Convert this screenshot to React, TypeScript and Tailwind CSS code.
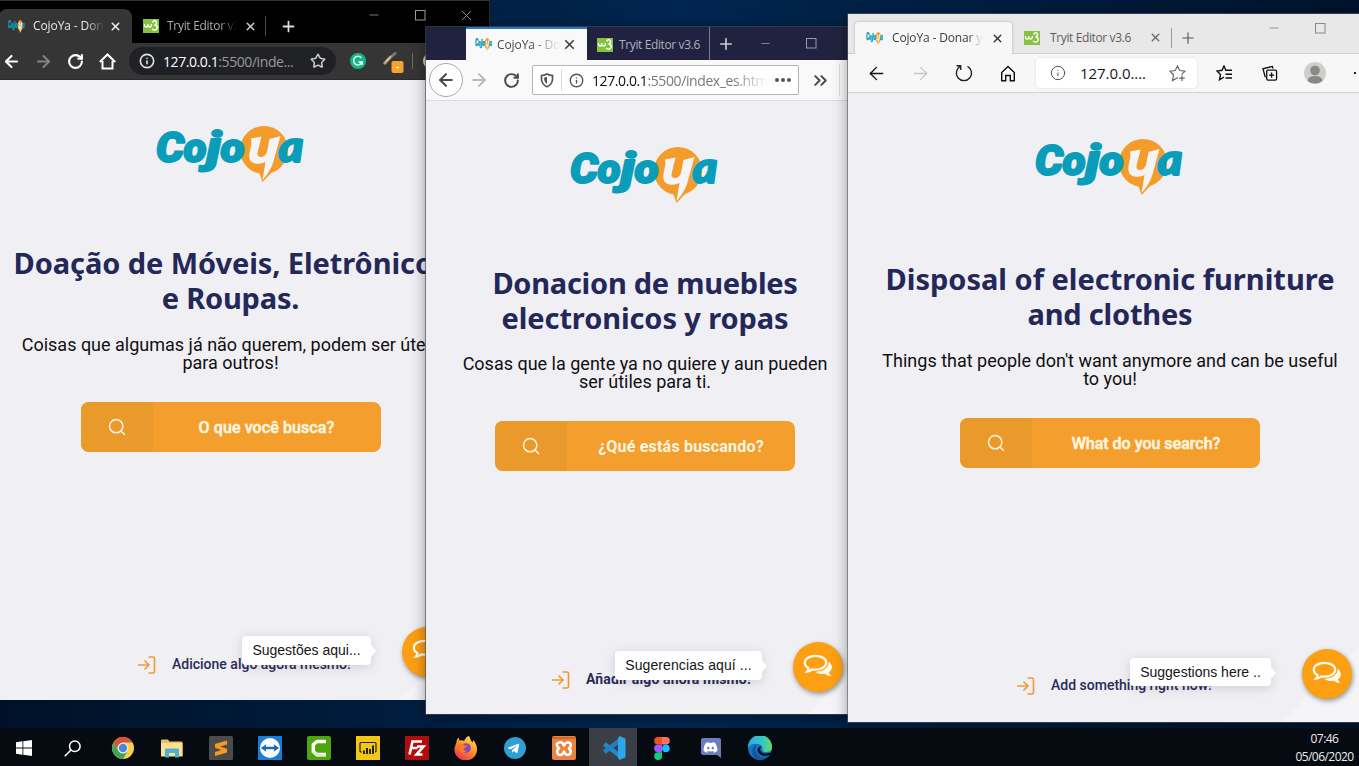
import type { ReactNode } from "react";
import {
  ArrowLeft,
  ArrowRight,
  ChevronsRight,
  House,
  Info,
  Minus,
  Plus,
  RotateCw,
  Search,
  Star,
  X,
} from "lucide-react";
import { FaTelegramPlane, FaDiscord } from "react-icons/fa";

const UI = "font-['Open_Sans','Noto_Sans',sans-serif]";

function Slot({ className = "", children }: { className?: string; children?: ReactNode }) {
  return <div className={`flex shrink-0 items-center justify-center ${className}`}>{children}</div>;
}

function Logo({ width, height }: { width: number; height: number }) {
  return (
    <svg width={width} height={height} viewBox="0 0 150 56" preserveAspectRatio="none" className="shrink-0">
      <circle cx="108" cy="24" r="24" fill="#f39c2b" />
      <path d="M103 46 L106.500 56 L117 45 Z" fill="#f39c2b" />
      <g fontFamily="Roboto, sans-serif" fontWeight="900" fontStyle="italic" fill="#0a9dba" stroke="#0a9dba" strokeWidth="2" strokeLinejoin="round">
        <text x="0" y="35.800" fontSize="43" textLength="28" lengthAdjust="spacingAndGlyphs">C</text>
        <text x="27.500" y="35.800" fontSize="40" textLength="23" lengthAdjust="spacingAndGlyphs">o</text>
        <text x="50.500" y="35.800" fontSize="42" textLength="14" lengthAdjust="spacingAndGlyphs">j</text>
        <text x="64.500" y="35.800" fontSize="40" textLength="24" lengthAdjust="spacingAndGlyphs">o</text>
        <text x="122.500" y="35.800" fontSize="43" textLength="25" lengthAdjust="spacingAndGlyphs" fontFamily="Lato, sans-serif">a</text>
      </g>
      <path
        d="M95 12.500 L105.500 10.500 L101.500 27 Q101 31 105 31 Q109 31 111 26 L113.500 13 L124.500 10 L117 37 Q114 46 106.500 54 L109.500 36 Q105 38.500 99 37.500 Q92 36 93.500 27 L95.500 17 Z"
        fill="#f4f3f5"
      />
    </svg>
  );
}

function CojoFavicon() {
  return <Logo width={17} height={13} />;
}

function SchoolsFavicon() {
  return (
    <svg width="16" height="14" viewBox="0 0 16 14" className="shrink-0">
      <rect width="16" height="14" fill="#86c140" />
      <path d="M1.500 5v1.500q0 1.500 1.500 1.500t1.800-1.500V5M4.800 6.500Q5 8 6.500 8t1.800-1.500V5" fill="none" stroke="#fff" strokeWidth="1.300" />
      <path d="M9.500 3.500Q12-.2 13.500 3q.3 2.500-2 3 3.500.2 2.500 3.500-1.500 3-5 .5" fill="none" stroke="#fff" strokeWidth="1.500" />
    </svg>
  );
}

function MaximizeIcon({ color }: { color: string }) {
  return (
    <svg width="11" height="11" viewBox="0 0 11 11">
      <rect x=".5" y=".5" width="9.500" height="9.500" fill="none" stroke={color} />
    </svg>
  );
}

function ReloadIcon({ color, width }: { color: string; width: number }) {
  return <RotateCw size={17} color={color} strokeWidth={width} />;
}

function ChatIcon() {
  return (
    <svg width="30" height="24" viewBox="0 0 30 24">
      <path d="M25.500 7.500c5 4 4 8.500.5 10.800.2 1.500 1.200 2.800 2.500 3.700-2.600.3-4.600-.6-6.200-2.200-3.600.7-7.500 0-10-2.100 8 .2 14-4.200 13.200-10.200z" fill="#fffaf0" />
      <path
        d="M12.500 1.800c6 0 10.700 3 10.700 6.900s-4.700 7-10.700 7c-1.100 0-2.200-.1-3.200-.3-1.500 1.100-3.300 2-5.300 2.200.8-.9 1.400-1.900 1.600-3.400C3.200 12.900 1.800 11 1.800 8.700c0-3.900 4.700-6.900 10.700-6.900z"
        fill="#fd9f12"
        stroke="#fffaf0"
        strokeWidth="2.200"
      />
    </svg>
  );
}

type PageProps = {
  title: ReactNode;
  text: ReactNode;
  search: string;
  link: string;
  hint: string;
  gap: string;
  textGap: string;
  linkPad: string;
  linkFont: string;
  buttonFont: string;
  hintPos: string;
  hintFont: string;
  chatPos: string;
  corner: string;
};

function LandingPage(p: PageProps) {
  return (
    <div className="relative flex min-h-0 flex-1 flex-col items-center overflow-hidden bg-[#f0eff4] pt-[46px]">
      <svg className={`absolute bottom-0 right-0 ${p.corner}`} viewBox="0 0 90 88" preserveAspectRatio="none">
        <path d="M0 88L90 0V88Z" fill="#f5f4f8" />
      </svg>
      <Logo width={150} height={56} />
      <h1 className={`${p.gap} whitespace-nowrap text-center font-['Noto_Sans',sans-serif] text-[29px] font-bold leading-[35px] text-[#232859]`}>{p.title}</h1>
      <p className={`${p.textGap} whitespace-nowrap text-center font-[Roboto,sans-serif] text-[18px] leading-[18px] text-[#101012]`}>{p.text}</p>
      <button className="mt-[30px] flex h-[50px] w-[300px] shrink-0 overflow-hidden rounded-[8px] bg-[#f49f2d]">
        <span className="flex h-full w-[72px] items-center justify-center bg-[#ea992b]">
          <Search size={20} strokeWidth={1.800} color="#fff5df" />
        </span>
        <span className={`flex h-full flex-1 items-center justify-center whitespace-nowrap pt-[2px] font-[Roboto,sans-serif] text-[16px] text-[#fff6e0] ${p.buttonFont}`}>
          {p.search}
        </span>
      </button>
      <div className={`mt-auto flex h-[20px] w-full shrink-0 items-center gap-[16px] ${p.linkPad}`}>
        <svg width="18" height="18" viewBox="0 0 18 18" fill="none" stroke="#ee9b35" strokeWidth="1.600" className="mt-px shrink-0">
          <path d="M0 9h11M6.500 4.500L11 9l-4.500 4.500M10.500 1H15q1.500 0 1.500 1.500v13q0 1.500-1.500 1.500h-4.500" />
        </svg>
        <span className={`whitespace-nowrap font-[Roboto,sans-serif] text-[14px] text-[#282c59] ${p.linkFont}`}>{p.link}</span>
      </div>
      <div className={`absolute flex items-center justify-center rounded-[4px] bg-white shadow-[0_2px_12px_rgba(0,0,0,0.14)] ${p.hintPos}`}>
        <span className={`whitespace-nowrap font-['Liberation_Sans',sans-serif] text-[14px] text-[#161616] ${p.hintFont}`}>{p.hint}</span>
        <svg width="5" height="12" viewBox="0 0 5 12" className="absolute -right-[5px] top-[9px]">
          <path d="M0 0L5 6L0 12Z" fill="#fff" />
        </svg>
      </div>
      <div className={`absolute flex h-[50px] w-[50px] items-center justify-center rounded-full bg-[#fd9f12] pb-[3px] shadow-[1px_2px_5px_rgba(0,0,0,0.4)] ${p.chatPos}`}>
        <ChatIcon />
      </div>
    </div>
  );
}

function ChromeWindow() {
  return (
    <section className="absolute -left-[28px] top-0 flex h-[700px] w-[518px] flex-col border-r border-[#2a2a2a] bg-[#353535]">
      <div className={`flex h-[43px] border-t border-[#333] bg-black pl-[27px] text-[12px] ${UI}`}>
        <div className="mt-[8px] flex w-[133px] items-center rounded-t-[8px] bg-[#353535] pl-[9px]">
          <CojoFavicon />
          <span className="ml-[8px] w-[71px] overflow-hidden whitespace-nowrap tracking-[-0.1px] text-[#e9e9e9] [mask-image:linear-gradient(to_right,#000_75%,transparent)]">CojoYa - Don</span>
          <Slot className="ml-px w-[20px]"><X size={13} strokeWidth={2.800} color="#eee" /></Slot>
        </div>
        <div className="mt-[8px] flex w-[133px] items-center pl-[11px]">
          <SchoolsFavicon />
          <span className="ml-[8px] w-[70px] overflow-hidden whitespace-nowrap tracking-[-0.3px] text-[#adadad] [mask-image:linear-gradient(to_right,#000_75%,transparent)]">Tryit Editor v3</span>
          <Slot className="ml-[3px] w-[20px]"><X size={13} strokeWidth={2.800} color="#ccc" /></Slot>
        </div>
        <div className="mt-[15px] h-[20px] w-px bg-[#4b4b4b]" />
        <Slot className="mt-[8px] w-[44px]"><Plus size={17} strokeWidth={2.500} color="#ddd" /></Slot>
        <div className="ml-[41px] flex h-[28px] items-center">
          <Slot className="w-[46px]"><Minus size={14} strokeWidth={1.400} color="#999" /></Slot>
          <Slot className="w-[46px]"><MaximizeIcon color="#999" /></Slot>
          <Slot className="w-[46px]"><X size={17} strokeWidth={1.300} color="#999" /></Slot>
        </div>
      </div>
      <div className={`flex h-[37px] shrink-0 items-center border-b border-[#2b2b2b] pl-[23px] ${UI}`}>
        <Slot className="w-[32px]"><ArrowLeft size={19} strokeWidth={2.600} color="#fff" /></Slot>
        <Slot className="w-[32px]"><ArrowRight size={19} strokeWidth={2.400} color="#858585" /></Slot>
        <Slot className="w-[32px]"><ReloadIcon color="#fff" width={3} /></Slot>
        <Slot className="w-[32px]">
          <svg width="17" height="17" viewBox="0 0 17 17" fill="none" stroke="#fff" strokeWidth="2"><path d="M.8 9L8.500 1.500 16.200 9M3.500 8v7.500h10V8" /></svg>
        </Slot>
        <div className="ml-[6px] flex h-[28px] w-[207px] items-center rounded-full bg-[#202124] pl-[10px]">
          <Info size={16} strokeWidth={2.400} color="#e5e5e5" />
          <span className="ml-[8px] w-[131px] whitespace-nowrap text-[14px] tracking-[-0.42px] text-[#9a9a9a]"><b className="font-normal text-white">127.0.0.1</b>:5500/inde...</span>
          <Slot className="ml-[14px] w-[20px]"><Star size={16} strokeWidth={2.300} color="#ccc" /></Slot>
        </div>
        <Slot className="ml-[14px] w-[16px]">
          <svg width="16" height="16" viewBox="0 0 16 16"><circle cx="8" cy="8" r="8" fill="#15b587" /><path d="M11.300 5A4.300 4.300 0 1 0 12 9H8.500M12.300 8.300v3.500" fill="none" stroke="#e9fff8" strokeWidth="1.500" /></svg>
        </Slot>
        <Slot className="ml-[16px] w-[22px]">
          <svg width="22" height="24" viewBox="0 0 22 24"><path d="M2 15L9 7.500" stroke="#c59a6c" strokeWidth="3" /><path d="M8 9L14 3.500" stroke="#77797e" strokeWidth="2.500" /><path d="M4 12L9.500 7" stroke="#f3eee6" /><rect x="9.500" y="12" width="12" height="12" rx="2" fill="#f5a42f" /><path d="M14 18.500h3" stroke="#fff" /></svg>
        </Slot>
        <div className="ml-[8px] h-[16px] w-px bg-[#6a6a6a]" />
        <div className="ml-[10px] h-[18px] w-[18px] rounded-full bg-[#d9cdb5]" />
      </div>
      <LandingPage
        title={<><span className="block tracking-[-0.08px]">Doação de Móveis, Eletrônicos</span><span className="block tracking-[-0.2px]">e Roupas.</span></>}
        text={<>Coisas que algumas já não querem, podem ser úteis<br />para outros!</>}
        search="O que você busca?"
        link="Adicione algo agora mesmo!"
        hint="Sugestões aqui..."
        gap="mt-[63px]"
        textGap="mt-[21px]"
        linkPad="mb-[26px] pl-[166px]"
        linkFont="font-medium"
        buttonFont="font-medium tracking-[0.1px] [-webkit-text-stroke:0.5px_#fff6e0]"
        hintPos="right-[118px] bottom-[35px] h-[29px] w-[129px]"
        hintFont="tracking-[0px]"
        chatPos="right-[37px] bottom-[23px]"
        corner="h-[90px] w-[90px]"
      />
    </section>
  );
}

function FirefoxWindow() {
  return (
    <section className="absolute left-[426px] top-[27px] flex h-[687px] w-[438px] flex-col bg-[#f9f9fa] shadow-[0_0_0_1px_rgba(70,75,85,0.65),0_2px_14px_rgba(0,0,0,0.4)]">
      <div className={`flex h-[33px] shrink-0 bg-[#20223f] pl-[40px] text-[12px] ${UI}`}>
        <div className="flex w-[121px] items-center border-t-2 border-[#2779c4] bg-[#f9f9fa] pl-[9px]">
          <CojoFavicon />
          <span className="ml-[5px] w-[63px] overflow-hidden whitespace-nowrap tracking-[-0.1px] text-[#4b4b4b] [mask-image:linear-gradient(to_right,#000_55%,transparent)]">CojoYa - Do</span>
          <Slot className="-ml-px w-[20px]"><X size={15} strokeWidth={2.700} color="#444" /></Slot>
        </div>
        <div className="flex w-[123px] items-center border-r border-[#777990] pl-[10px] pt-[2px]">
          <SchoolsFavicon />
          <span className="ml-[6px] whitespace-nowrap tracking-[-0.38px] text-[#b0b1bf]">Tryit Editor v3.6</span>
        </div>
        <Slot className="w-[32px]"><Plus size={18} strokeWidth={2.200} color="#c9c9d3" /></Slot>
        <Slot className="w-[46px]"><Minus size={13} strokeWidth={1.500} color="#9899a9" /></Slot>
        <Slot className="w-[46px]"><MaximizeIcon color="#9899a9" /></Slot>
      </div>
      <div className={`flex h-[41px] shrink-0 items-center border-b border-[#dcdcde] pl-[3px] ${UI}`}>
        <Slot className="h-[34px] w-[34px] rounded-full border border-[#aaa] bg-white"><ArrowLeft size={20} strokeWidth={2.500} color="#4a4a4a" /></Slot>
        <Slot className="w-[32px]"><ArrowRight size={20} strokeWidth={2.300} color="#b9b9b9" /></Slot>
        <Slot className="w-[32px]"><ReloadIcon color="#4a4a4a" width={2.800} /></Slot>
        <div className="ml-[5px] flex h-[30px] w-[267px] items-center rounded-[2px] border border-[#b5b5b7] bg-white">
          <Slot className="w-[28px]">
            <svg width="14" height="15" viewBox="0 0 14 15"><path d="M7 1q3 1.500 5.500 1.500v4Q12 11.500 7 13.800 2 11.500 1.500 6.500v-4Q4 2.500 7 1z" fill="none" stroke="#555" strokeWidth="1.700" /><path d="M7 3.800v7.200Q4.200 9.500 4 4.800z" fill="#555" /></svg>
          </Slot>
          <div className="h-[22px] w-px bg-[#d7d7db]" />
          <Slot className="w-[28px]"><Info size={15} strokeWidth={2.200} color="#555" /></Slot>
          <span className="ml-[2px] w-[176px] overflow-hidden whitespace-nowrap text-[14px] tracking-[-0.4px] text-[#777] [mask-image:linear-gradient(to_right,#000_80%,transparent)]"><b className="font-normal text-[#0c0c0d]">127.0.0.1</b>:5500/index_es.htm</span>
          <Slot className="ml-[6px] w-[18px] gap-[2px]"><i className="h-[4px] w-[4px] rounded-full bg-[#555]" /><i className="h-[4px] w-[4px] rounded-full bg-[#555]" /><i className="h-[4px] w-[4px] rounded-full bg-[#555]" /></Slot>
        </div>
        <Slot className="ml-[10px] w-[22px]"><ChevronsRight size={21} strokeWidth={2.300} color="#4a4a4a" /></Slot>
        <div className="ml-[8px] h-[32px] w-px bg-[#dcdcde]" />
      </div>
      <LandingPage
        title={<><span className="block tracking-[-0.26px]">Donacion de muebles</span><span className="block tracking-[-0.1px]">electronicos y ropas</span></>}
        text={<>Cosas que la gente ya no quiere y aun pueden<br />ser útiles para ti.</>}
        search="¿Qué estás buscando?"
        link="Añadir algo ahora mismo!"
        hint="Sugerencias aquí ..."
        gap="mt-[62px]"
        textGap="mt-[20px]"
        linkPad="mb-[25px] pl-[126px]"
        linkFont="font-bold tracking-[0.15px]"
        buttonFont="font-bold tracking-[0.2px]"
        hintPos="right-[102px] bottom-[34px] h-[29px] w-[147px]"
        hintFont="tracking-[0.1px]"
        chatPos="right-[21px] bottom-[22px]"
        corner="h-[60px] w-[56px]"
      />
    </section>
  );
}

function EdgeWindow() {
  return (
    <section className="absolute left-[848px] top-[14px] flex h-[708px] w-[524px] flex-col bg-[#f7f7f7] shadow-[0_0_0_1px_rgba(85,90,100,0.6),0_2px_14px_rgba(0,0,0,0.4)]">
      <div className={`flex h-[40px] shrink-0 border-b border-[#d2d2d2] bg-[#e8e8e8] pl-[7px] text-[12px] ${UI}`}>
        <div className="-mb-px mt-[8px] flex w-[157px] items-center rounded-t-[4px] bg-[#f7f7f7] pl-[11px] shadow-[0_0_3px_rgba(0,0,0,0.25)] [clip-path:inset(-4px_-4px_0_-4px)]">
          <CojoFavicon />
          <span className="ml-[9px] w-[90px] overflow-hidden whitespace-nowrap tracking-[-0.15px] text-[#3c3c3c] [mask-image:linear-gradient(to_right,#000_85%,transparent)]">CojoYa - Donar y</span>
          <Slot className="ml-[5px] w-[20px]"><X size={13} strokeWidth={2.500} color="#333" /></Slot>
        </div>
        <div className="mt-[8px] flex w-[159px] items-center pl-[12px]">
          <SchoolsFavicon />
          <span className="ml-[10px] w-[95px] whitespace-nowrap tracking-[-0.38px] text-[#5c5c5c]">Tryit Editor v3.6</span>
          <Slot className="w-[20px]"><X size={13} strokeWidth={2.400} color="#666" /></Slot>
        </div>
        <div className="mt-[14px] h-[20px] w-px bg-[#999]" />
        <Slot className="mt-[8px] w-[31px]"><Plus size={18} strokeWidth={1.500} color="#555" /></Slot>
        <div className="ml-[48px] flex h-[28px] items-center">
          <Slot className="w-[46px]"><Minus size={14} strokeWidth={1.500} color="#888" /></Slot>
          <Slot className="w-[46px]"><MaximizeIcon color="#888" /></Slot>
        </div>
      </div>
      <div className={`flex h-[39px] shrink-0 items-center border-b border-[#d0d0d2] pl-[6px] ${UI}`}>
        <Slot className="w-[44px]"><ArrowLeft size={21} strokeWidth={1.600} color="#111" /></Slot>
        <Slot className="w-[44px]"><ArrowRight size={21} strokeWidth={1.500} color="#c8c8c8" /></Slot>
        <Slot className="w-[44px]">
          <svg width="18" height="18" viewBox="0 0 18 18" fill="none" stroke="#222" strokeWidth="1.400"><path d="M12.500 2.300A7.600 7.600 0 1 1 5.200 2.400M1.500 1.700H5.700V6" /></svg>
        </Slot>
        <Slot className="w-[44px]">
          <svg width="16" height="17" viewBox="0 0 16 17" fill="none" stroke="#111" strokeWidth="1.400"><path d="M1.700 7.500V15.800h4V10.500h4.600v5.300h4V7.500L8 1.500z" /></svg>
        </Slot>
        <div className="ml-[6px] flex h-[30px] w-[161px] items-center rounded-[4px] bg-white pl-[14px] shadow-[0_0_2px_rgba(0,0,0,0.15)]">
          <Info size={16} strokeWidth={1.500} color="#555" />
          <span className="ml-[14px] w-[66px] whitespace-nowrap text-[15px] tracking-[-0.05px] text-[#161616]">127.0.0....</span>
          <Slot className="ml-[21px] w-[20px]">
            <svg width="17" height="17" viewBox="0 0 17 17" fill="none" stroke="#666" strokeWidth="1.200"><path d="M9 12.500L3.500 15.500l1-5.500L1 6.200l5.200-.7L8.500 1l2.300 4.500 5.200.7-3.500 3.500M13 10.500v5.500M10.200 13.200h5.600" /></svg>
          </Slot>
        </div>
        <Slot className="ml-[19px] w-[18px]">
          <svg width="18" height="16" viewBox="0 0 18 16" fill="none" stroke="#111" strokeWidth="1.400"><path d="M8 12L3.500 14.800l1-5.200L1 6l5-.7L8 1l1.800 4.300H16M9.500 9.200H16M9.500 13H16" /></svg>
        </Slot>
        <Slot className="ml-[28px] w-[16px]">
          <svg width="17" height="17" viewBox="0 0 17 17" fill="none" stroke="#111" strokeWidth="1.400"><rect x="5" y="5" width="10.500" height="10.500" rx="1.500" /><path d="M10.200 7.500v5.500M7.500 10.200H13M3.500 12.500L1 3.500 11 1l.8 2.200" /></svg>
        </Slot>
        <Slot className="ml-[26px] w-[22px]">
          <svg width="22" height="22" viewBox="0 0 22 22"><circle cx="11" cy="11" r="11" fill="#cfcecd" /><circle cx="11" cy="8.500" r="4.800" fill="#8b8987" /><path d="M3.500 19Q4 14 11 14t7.500 5Q11 24 3.500 19z" fill="#8b8987" /></svg>
        </Slot>
        <i className="ml-[28px] h-[2px] w-[2px] bg-[#222]" />
      </div>
      <LandingPage
        title={<><span className="block">Disposal of electronic furniture</span><span className="block tracking-[-0.2px]">and clothes</span></>}
        text={<>Things that people don't want anymore and can be useful<br />to you!</>}
        search="What do you search?"
        link="Add something right now!"
        hint="Suggestions here .."
        gap="mt-[66px]"
        textGap="mt-[21px]"
        linkPad="mb-[27px] pl-[169px]"
        linkFont="font-medium"
        buttonFont="font-medium [-webkit-text-stroke:0.5px_#fff6e0]"
        hintPos="right-[101px] bottom-[36px] h-[28px] w-[141px]"
        hintFont="tracking-[0px]"
        chatPos="right-[20px] bottom-[23px]"
        corner="h-[88px] w-[90px]"
      />
    </section>
  );
}

function WindowsIcon() {
  return <svg width="16" height="16" viewBox="0 0 16 16" fill="#fff"><path d="M0 2.300L6.500 1.300V7.500H0zM7.300 1.200L16 0V7.500H7.300zM0 8.400H6.500V14.700L0 13.700zM7.300 8.400H16V16L7.300 14.800z" /></svg>;
}

function ChromeIcon() {
  return (
    <svg width="22" height="22" viewBox="0 0 22 22">
      <circle cx="11" cy="11" r="11" fill="#f9d04d" />
      <path d="M1.500 5.500A11 11 0 0 1 20.500 5.500H11A5.500 5.500 0 0 0 6.200 13.800z" fill="#d9503f" />
      <path d="M1.500 5.500A11 11 0 0 0 11 22L15.800 13.800A5.500 5.500 0 0 1 6.200 13.800z" fill="#3fa35c" />
      <circle cx="11" cy="11" r="5.200" fill="#f3f3f3" />
      <circle cx="11" cy="11" r="4.200" fill="#4c86dd" />
    </svg>
  );
}

function ExplorerIcon() {
  return (
    <svg width="22" height="19" viewBox="0 0 22 19">
      <path d="M0 1.500Q0 .5 1 .5H7L8.500 2.500H20.500Q21.500 2.500 21.500 3.500V17H0z" fill="#e8c063" />
      <path d="M0 4H21.500V17.500H0z" fill="#fae08f" />
      <path d="M4 10.500Q4 9.500 5 9.500H17Q18 9.500 18 10.500V18.500H14V14H8V18.500H4z" fill="#4fb0d3" />
    </svg>
  );
}

function SublimeIcon() {
  return <svg width="24" height="24" viewBox="0 0 24 24"><rect width="24" height="24" rx="1.500" fill="#4c4b4b" /><path d="M18 4.500V8.500L11 10.500 18 12.700V16.500L6 20V16L12.500 14 6 11.800V8z" fill="#f89a1c" /></svg>;
}

function TeamViewerIcon() {
  return <svg width="24" height="24" viewBox="0 0 24 24"><rect width="24" height="24" rx="1" fill="#1b7dd8" /><circle cx="12" cy="12" r="10" fill="#fff" /><path d="M2.800 12L8.300 8.300 7.800 10.800H16.200L15.700 8.300 21.200 12 15.700 15.700 16.200 13.200H7.800L8.300 15.700z" fill="#1769b8" /></svg>;
}

function CamtasiaIcon() {
  return <svg width="24" height="24" viewBox="0 0 24 24"><rect width="24" height="24" rx="2" fill="#4ca60c" /><path d="M19 5.500H10L6.300 8.500v7l3.700 3H19" fill="none" stroke="#fff" strokeWidth="3.400" /><path d="M4.600 15v1.500l4.800 4.300H19v-1.500" fill="#d8ebcb" /></svg>;
}

function PowerBiIcon() {
  return <svg width="24" height="24" viewBox="0 0 24 24"><rect width="24" height="24" fill="#f2c811" /><path d="M6 16H5Q4 16 4 15V7.500Q4 6.500 5 6.500H19Q20 6.500 20 7.500V15Q20 16 19 16" fill="none" stroke="#222" strokeWidth="1.200" /><path d="M8 18V14.500M11 18V12M14 18V13M17 18V9.500" stroke="#222" strokeWidth="2" /></svg>;
}

function FileZillaIcon() {
  return <svg width="24" height="24" viewBox="0 0 24 24"><rect x=".5" y=".5" width="23" height="23" fill="#b40b0c" stroke="#d01515" strokeDasharray="1.500 1" /><path d="M4.500 18.500L7.500 5.500H17M6 12H12.500M12 10.500H18.500L11.500 18.500H17.500" fill="none" stroke="#fff" strokeWidth="2.600" /></svg>;
}

function FirefoxIcon() {
  return (
    <svg width="24" height="24" viewBox="0 0 24 24">
      <defs><linearGradient id="fx" x1=".8" y1="0" x2=".2" y2="1"><stop offset="0" stopColor="#ffe14a" /><stop offset=".5" stopColor="#ff8a27" /><stop offset="1" stopColor="#ee2a5d" /></linearGradient></defs>
      <path d="M2.500 6Q2.500 3.500 4.500 1.500L5.500 4.500Q9 4 10 5 13-1 15.500.5 16 3.500 18.500 6.500L19.500 4Q23 9 23 13A11.300 10.700 0 1 1 .8 11z" fill="url(#fx)" />
      <circle cx="12" cy="12" r="4.800" fill="#8a45c0" />
      <path d="M4 8Q8 6.500 10.500 9.500H13.500Q12 12 9.500 12.500 10 15.500 13 14.500 9 19 5.500 13z" fill="#fb7a24" />
    </svg>
  );
}

function XamppIcon() {
  return <svg width="24" height="24" viewBox="0 0 24 24"><rect width="24" height="24" rx="2" fill="#e98440" /><path d="M0 2H24" stroke="#c9611d" strokeWidth="1.500" /><g fill="none" stroke="#fff" strokeWidth="2.600" strokeLinejoin="round"><path d="M12 9.500Q10.500 5.500 7 6.500T5.500 10.500L7 12.500Q4.500 14 5.500 17T10 18.500Q11.500 17.500 12 15.500 12.500 17.500 14 18.500 17.500 19.500 18.500 17T17 12.500L18.500 10.500Q19.500 7 16.500 6.500T12 9.500z" /></g></svg>;
}

function VsCodeIcon() {
  return <svg width="25" height="24" viewBox="0 0 25 24"><path d="M3.300 8L18.500 19.500" stroke="#2489ca" strokeWidth="4.600" /><path d="M3.300 16L18.500 4.500" stroke="#1f80c4" strokeWidth="4.600" /><path d="M18.500 0L24.500 2.800V21.200L18.500 24 17 22V2z" fill="#2da6ee" /></svg>;
}

function FigmaIcon() {
  return <svg width="16" height="23" viewBox="0 0 16 23"><path d="M4 0H8V7.600H4A3.800 3.800 0 0 1 4 0z" fill="#f24e1e" /><path d="M8 0H12A3.800 3.800 0 0 1 12 7.600H8z" fill="#ff7262" /><path d="M4 7.600H8V15.200H4A3.800 3.800 0 0 1 4 7.600z" fill="#a259ff" /><circle cx="11.900" cy="11.400" r="3.800" fill="#1abcfe" /><path d="M4 15.200H8V19A3.900 3.900 0 1 1 4 15.200z" fill="#0acf83" /></svg>;
}

function DiscordIcon() {
  return (
    <span className="relative flex h-[20px] w-[20px] items-center justify-center">
      <svg width="20" height="20" viewBox="0 0 20 20" className="absolute inset-0"><path d="M2 0H18Q20 0 20 2V20L16 17H2Q0 17 0 15V2Q0 0 2 0z" fill="#6c7dbd" /></svg>
      <FaDiscord size={15} color="#fff" className="relative -top-px" />
    </span>
  );
}

function EdgeIcon() {
  return (
    <svg width="24" height="24" viewBox="0 0 24 24">
      <defs><linearGradient id="eg" x1="0" y1=".3" x2="1" y2=".3"><stop offset="0" stopColor="#2ba9e0" /><stop offset=".6" stopColor="#36c6c8" /><stop offset="1" stopColor="#68d95a" /></linearGradient></defs>
      <circle cx="12" cy="12" r="12" fill="#1673c4" />
      <path d="M0 11A12 12 0 0 1 24 11Q24 16 18.500 16 14 16 14.500 13.500 15.500 9 10 8 3 7 0 12z" fill="url(#eg)" />
      <path d="M9 9Q5.500 14 9.500 18.500 14 23 21 19.500 17 24.500 11 24 4 22.500 4 15 4.500 10 9 9z" fill="#1257a0" />
      <path d="M13.500 10Q11 13 13 15.500 16 19 22.500 16.500L24 18 21.500 19Q14 21.500 10.500 17 7.500 12 13.500 10z" fill="#081019" />
    </svg>
  );
}

function Taskbar() {
  return (
    <footer className="absolute bottom-0 left-0 flex h-[38px] w-full items-stretch bg-[#060a11]">
      <Slot className="w-[48px] pt-[2px]"><WindowsIcon /></Slot>
      <Slot className="w-[48px] pt-[2px]">
        <svg width="17" height="17" viewBox="0 0 17 17" fill="none" stroke="#fff" strokeWidth="1.500"><circle cx="10.800" cy="6.200" r="5.300" /><path d="M7 10L.7 16.300" /></svg>
      </Slot>
      <Slot className="ml-[2px] w-[49px] pt-[2px]"><ChromeIcon /></Slot>
      <Slot className="w-[49px] pt-[2px]"><ExplorerIcon /></Slot>
      <Slot className="w-[49px] pt-[2px]"><SublimeIcon /></Slot>
      <Slot className="w-[49px] pt-[2px]"><TeamViewerIcon /></Slot>
      <Slot className="w-[49px] pt-[2px]"><CamtasiaIcon /></Slot>
      <Slot className="w-[49px] pt-[2px]"><PowerBiIcon /></Slot>
      <Slot className="w-[49px] pt-[2px]"><FileZillaIcon /></Slot>
      <Slot className="w-[49px] pt-[2px]"><FirefoxIcon /></Slot>
      <Slot className="w-[49px] pt-[2px]">
        <span className="flex h-[22px] w-[22px] items-center justify-center rounded-full bg-[#2f9fd4]"><FaTelegramPlane size={13} color="#fff" className="mr-[2px]" /></span>
      </Slot>
      <Slot className="w-[50px] pt-[2px]"><XamppIcon /></Slot>
      <Slot className="w-[48px] bg-[#3b3f45] pt-[2px]"><VsCodeIcon /></Slot>
      <Slot className="w-[49px] pt-[2px]"><FigmaIcon /></Slot>
      <Slot className="w-[49px] pt-[2px]"><DiscordIcon /></Slot>
      <Slot className="w-[49px] pt-[2px]"><EdgeIcon /></Slot>
      <div className={`ml-auto flex w-[69px] flex-col items-center pt-[2px] text-[12px] leading-[18px] tracking-[-0.55px] text-[#eee] ${UI}`}>
        <span>07:46</span>
        <span>05/06/2020</span>
      </div>
    </footer>
  );
}

export default function App() {
  return (
    <main className="relative h-[766px] w-[1359px] overflow-hidden bg-linear-to-r from-[#001127] via-[#002650] to-[#00132c]">
      <ChromeWindow />
      <FirefoxWindow />
      <EdgeWindow />
      <Taskbar />
    </main>
  );
}
